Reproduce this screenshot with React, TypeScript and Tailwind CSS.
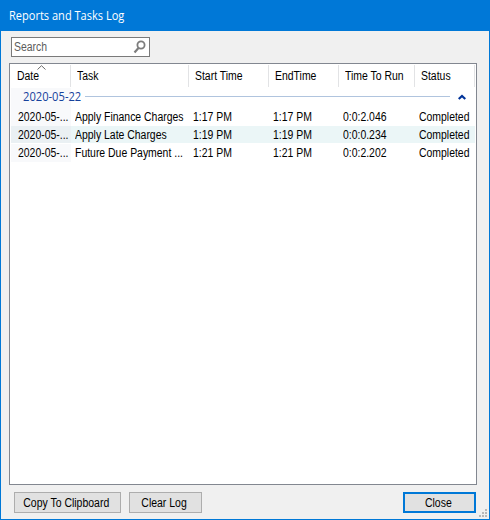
import type { ReactNode } from 'react';

// Reports and Tasks Log dialog: title bar, search box, grouped list view and footer buttons.

interface LogEntry {
  date: string;
  task: string;
  start: string;
  end: string;
  duration: string;
  status: string;
}

const ENTRIES: LogEntry[] = [
  { date: '2020-05-...', task: 'Apply Finance Charges', start: '1:17 PM', end: '1:17 PM', duration: '0:0:2.046', status: 'Completed' },
  { date: '2020-05-...', task: 'Apply Late Charges', start: '1:19 PM', end: '1:19 PM', duration: '0:0:0.234', status: 'Completed' },
  { date: '2020-05-...', task: 'Future Due Payment ...', start: '1:21 PM', end: '1:21 PM', duration: '0:0:2.202', status: 'Completed' },
];

const HEADERS = ['Date', 'Task', 'Start Time', 'EndTime', 'Time To Run', 'Status'];

const COLUMNS = 'grid w-[464px] grid-cols-[60px_118px_80px_70px_76px_60px]';

function Label({ children }: { children: ReactNode }) {
  return <span className="inline-block origin-left scale-x-[0.87] whitespace-nowrap">{children}</span>;
}

function SearchBox() {
  return (
    <div className="ml-[10px] mt-[6px] flex h-5 w-[139px] items-center border border-[#7a7a7a] bg-white pl-[2px] text-[#5c5c5c]">
      <Label>Search</Label>
      <svg className="ml-auto mr-[3px] h-[14px] w-[13px]" viewBox="0 0 13 14" fill="none" stroke="#7d7d7d">
        <circle cx="8" cy="5" r="3.6" strokeWidth="1.8" />
        <path d="M5.5 8L1.5 12.5" strokeWidth="2.2" />
      </svg>
    </div>
  );
}

function HeaderRow() {
  return (
    <div className={`${COLUMNS} h-6 pt-px`}>
      {HEADERS.map((header, i) => (
        <div key={header} className="relative h-[22px] border-r border-[#e2e3e5] pl-[6px] leading-[22px]">
          <Label>{header}</Label>
          {i === 0 && (
            <svg className="absolute left-[26px] top-0 h-[5px] w-[9px]" viewBox="0 0 9 5" fill="none" stroke="#6b6b6b">
              <path d="M.5 4.5L4.5 .7L8.5 4.5" />
            </svg>
          )}
        </div>
      ))}
    </div>
  );
}

function GroupRow() {
  return (
    <div className="flex h-5 items-center">
      <div className="h-5 w-[60px] bg-[#f8f9fb] pl-3 font-['Open_Sans',sans-serif] leading-[18px] text-[#16429c]">
        <span className="inline-block origin-left scale-x-[0.93] whitespace-nowrap">2020-05-22</span>
      </div>
      <div className="-mt-[3px] ml-[14px] h-px w-[365px] bg-[#b0c4de]" />
      <svg className="-mt-[2px] ml-[8px] h-[6px] w-2" viewBox="0 0 8 6" fill="none" stroke="#003399" strokeWidth="2.2">
        <path d="M.7 5L4 1.9L7.3 5" />
      </svg>
    </div>
  );
}

function EntryRow({ entry, striped }: { entry: LogEntry; striped: boolean }) {
  const cells = [entry.task, entry.start, entry.end, entry.duration, entry.status];

  return (
    <div className="h-[18px]">
      <div className={`${COLUMNS} h-[17px] leading-[18px] ${striped ? 'bg-[#ebf6f7]' : ''}`}>
        <div className={`pl-[7px] ${striped ? 'h-[17px] bg-[#eaf0f3]' : 'h-[18px] bg-[#f8f9fb]'}`}>
          <Label>{entry.date}</Label>
        </div>
        {cells.map((cell, i) => (
          <div key={i} className="pl-[4px]">
            <Label>{cell}</Label>
          </div>
        ))}
      </div>
    </div>
  );
}

function SizeGrip() {
  return (
    <svg className="absolute bottom-[2px] right-[2px] h-2 w-2" viewBox="0 0 8 8" fill="#b8b8b8">
      <path d="M6 0h2v2H6zM3 3h2v2H3zM6 3h2v2H6zM0 6h2v2H0zM3 6h2v2H3zM6 6h2v2H6z" />
    </svg>
  );
}

export default function App() {
  return (
    <div className="relative flex h-[520px] w-[490px] flex-col border border-t-0 border-[#0078d7] bg-[#f0f0f0] font-['Liberation_Sans',Arial,sans-serif] text-[12px] text-black">
      <div className="h-[31px] bg-[#0078d7] pl-[8px] font-['Open_Sans',sans-serif] leading-[32px] text-white">
        <span className="inline-block origin-left scale-x-[0.92] whitespace-nowrap">Reports and Tasks Log</span>
      </div>

      <SearchBox />

      <div className="ml-2 mt-[6px] h-[422px] w-[468px] border border-[#828790] bg-white pl-px">
        <HeaderRow />
        <GroupRow />
        {ENTRIES.map((entry, i) => (
          <EntryRow key={entry.start} entry={entry} striped={i % 2 === 1} />
        ))}
      </div>

      <div className="ml-[13px] mt-[7px] flex h-[21px] text-center leading-[21px]">
        <button className="flex h-[21px] w-[107px] items-center justify-center border border-[#adadad] bg-[#e1e1e1] pr-[3px] pt-[2px]">
          <span className="scale-x-[0.872] whitespace-nowrap">Copy To Clipboard</span>
        </button>
        <button className="ml-2 flex h-[21px] w-[73px] items-center justify-center border border-[#adadad] bg-[#e1e1e1] pr-[2px] pt-[2px]">
          <span className="scale-x-[0.872] whitespace-nowrap">Clear Log</span>
        </button>
        <button className="ml-[201px] flex h-[21px] w-[73px] items-center justify-center border-2 border-[#0078d7] bg-[#e1e1e1] pr-[2px] pt-[2px]">
          <span className="scale-x-[0.872] whitespace-nowrap">Close</span>
        </button>
      </div>

      <SizeGrip />
    </div>
  );
}
